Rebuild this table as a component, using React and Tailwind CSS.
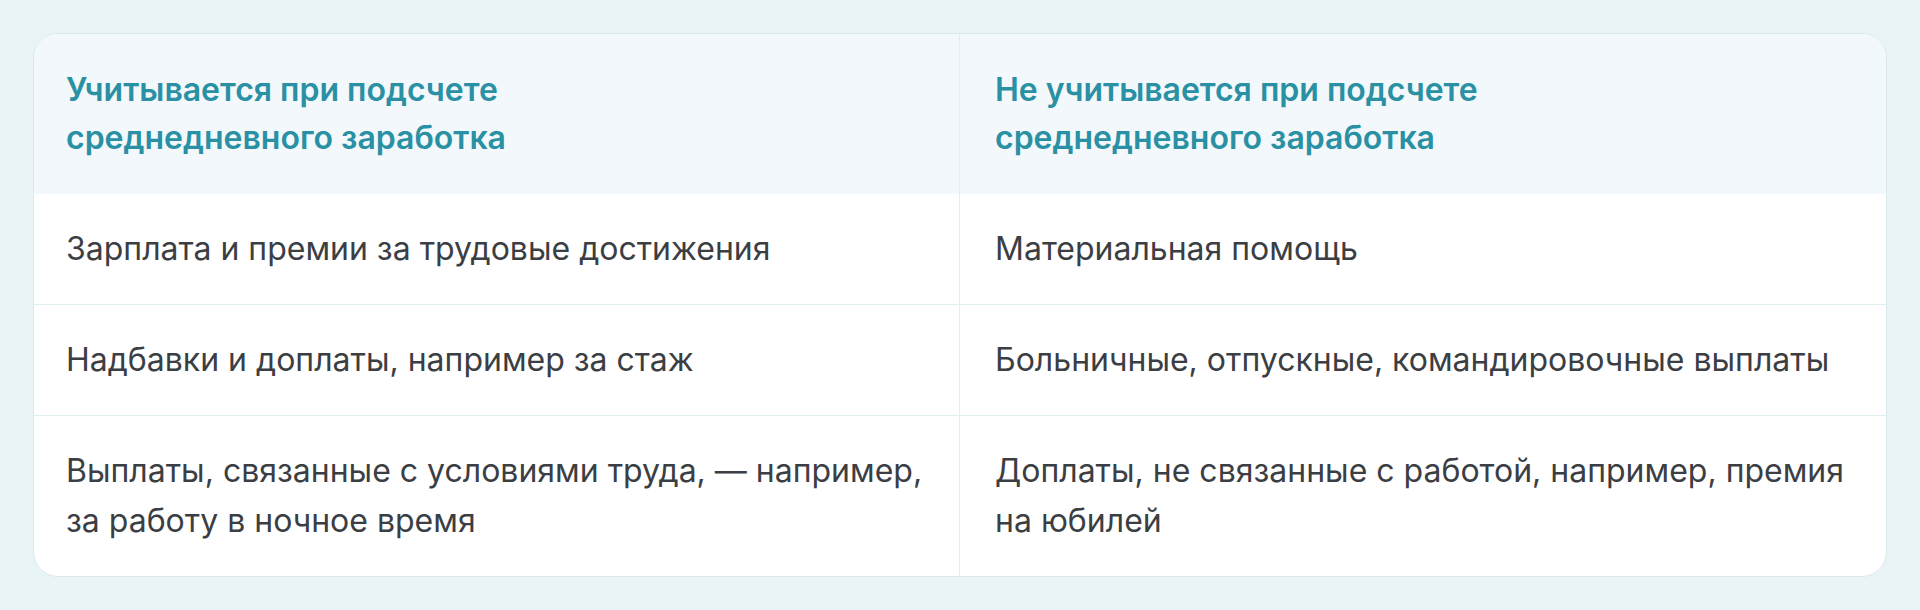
const rows = [
  ["Зарплата и премии за трудовые достижения", "Материальная помощь"],
  ["Надбавки и доплаты, например за стаж", "Больничные, отпускные, командировочные выплаты"],
  [
    "Выплаты, связанные с условиями труда, — например, за работу в ночное время",
    "Доплаты, не связанные с работой, например, премия на юбилей",
  ],
];

export default function App() {
  return (
    <div className="min-h-[610px] bg-[#e8f4f6] px-[33px] pt-[33px] pb-[34px] font-['Inter',sans-serif]">
      <div className="overflow-hidden rounded-[25px] border border-[#dbe9ee] bg-white">
        {/* head */}
        <div className="grid grid-cols-2 bg-[#f2f8fb]">
          <div className="border-r border-[#e1eef2] px-8 py-8 text-[32px] font-semibold leading-[48px] text-[#2a90a4]">
            Учитывается при подсчете
            <br />
            среднедневного заработка
          </div>
          <div className="px-[35px] py-8 text-[32px] font-semibold leading-[48px] text-[#2a90a4]">
            Не учитывается при подсчете
            <br />
            среднедневного заработка
          </div>
        </div>

        {rows.map((row, i) => (
          <div
            key={i}
            className={
              "grid grid-cols-2 text-[32px] leading-[50px] text-[#3b3e43] " +
              (i > 0 ? "border-t border-[#e1eef2]" : "")
            }
          >
            <div className="border-r border-[#e1eef2] px-8 py-[30px]">{row[0]}</div>
            <div className="px-[35px] py-[30px]">{row[1]}</div>
          </div>
        ))}
      </div>
    </div>
  );
}
